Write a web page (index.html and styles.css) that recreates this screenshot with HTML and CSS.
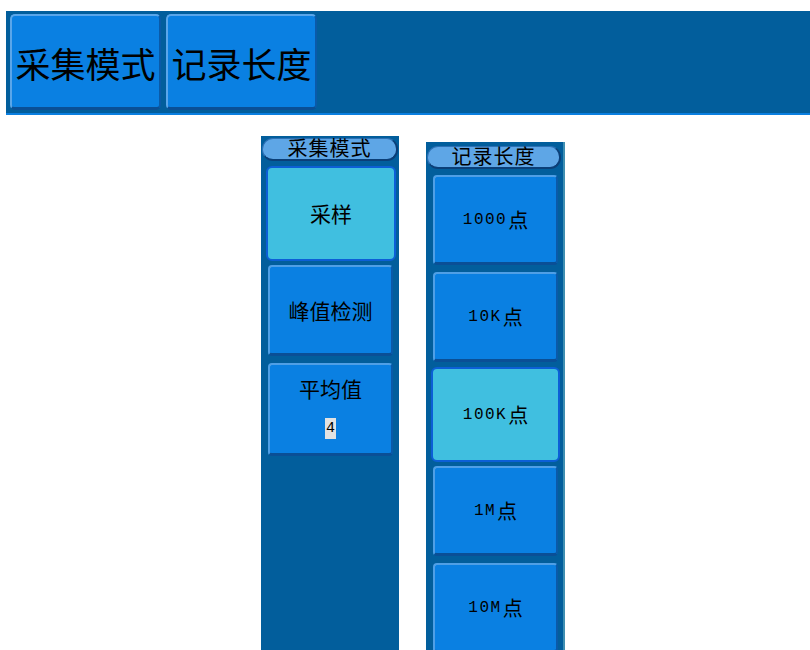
FILE: index.html
```html
<!DOCTYPE html>
<html lang="zh">
<head>
<meta charset="utf-8">
<title>采集模式 / 记录长度</title>
<link rel="stylesheet" href="styles.css">
</head>
<body>
<div class="topbar">
  <div class="top-btn">采集模式</div>
  <div class="top-btn">记录长度</div>
</div>
<div class="panels">
  <div class="panel panel-acq">
    <div class="pill">采集模式</div>
    <div class="btn sel"><span class="cn">采样</span></div>
    <div class="btn"><span class="cn">峰值检测</span></div>
    <div class="btn btn-avg">
      <span class="cn">平均值</span>
      <span class="num-box">4</span>
    </div>
  </div>
  <div class="panel panel-len">
    <div class="pill">记录长度</div>
    <div class="btn"><span class="val">1000<span class="pt">点</span></span></div>
    <div class="btn"><span class="val">10K<span class="pt">点</span></span></div>
    <div class="btn sel"><span class="val">100K<span class="pt">点</span></span></div>
    <div class="btn"><span class="val">1M<span class="pt">点</span></span></div>
    <div class="btn"><span class="val">10M<span class="pt">点</span></span></div>
  </div>
</div>
</body>
</html>
```
FILE: styles.css
```css
* { box-sizing: border-box; }
html, body { margin: 0; padding: 0; background: #ffffff; overflow: hidden; }
body {
  font-family: "Noto Sans CJK SC", "Liberation Sans", sans-serif;
  color: #000;
  width: 810px;
  height: 650px;
}
.topbar {
  margin: 11px 0 0 6px;
  height: 104px;
  background: #025e9c;
  border-bottom: 2px solid #0a7fe0;
  display: flex;
  gap: 5px;
  padding: 3px 0 0 4px;
}
.top-btn {
  width: 151px;
  height: 96px;
  background: #0a80e2;
  border-radius: 5px;
  border-top: 2px solid #5aa6ea;
  border-left: 2px solid #5aa6ea;
  border-right: 2px solid #0a5aa8;
  border-bottom: 3px solid #0a4f96;
  display: flex;
  align-items: center;
  justify-content: center;
  font-size: 35px;
  line-height: 1;
  padding-top: 2px;
}
.panels {
  display: flex;
  align-items: flex-start;
  padding-left: 261px;
  gap: 27px;
}
.panel {
  background: #025e9c;
  height: 560px;
  display: flex;
  flex-direction: column;
}
.panel-acq {
  width: 138px;
  margin-top: 21px;
  padding: 2px 1px 0 1px;
}
.panel-len {
  width: 139px;
  margin-top: 27px;
  padding: 4px 2px 0 1px;
  border-right: 2px solid #3f8fb2;
}
.pill {
  height: 23px;
  border-radius: 11px;
  background: #5ea6e6;
  border: 1px solid #2c6fb4;
  border-bottom: 2px solid #0b3f78;
  border-right: 2px solid #0b3f78;
  font-size: 20px;
  line-height: 18px;
  text-align: center;
  letter-spacing: 1px;
  white-space: nowrap;
}
.btn {
  width: 125px;
  height: 90px;
  margin: 7px 0 0 6px;
  background: #0a80e2;
  border-radius: 4px;
  border-top: 2px solid #4f9fe6;
  border-left: 2px solid #4f9fe6;
  border-right: 2px solid #0a5aa8;
  border-bottom: 3px solid #0a4f96;
  display: flex;
  flex-direction: column;
  align-items: center;
  justify-content: center;
}
.btn + .btn { margin-top: 7px; }
.panel-len .pill + .btn { margin-top: 6px; }
.btn.sel {
  background: #40bfe0;
  border: 2px solid #0c5fd6;
  border-radius: 6px;
  width: 130px;
  height: 95px;
  margin-left: 4px;
  margin-bottom: -3px;
}
.panel-len .btn.sel { margin-top: 5px; width: 129px; margin-left: 4px; }
.panel-acq .pill + .btn.sel { margin-top: 5px; }
.panel-acq .btn { height: 91px; }
.panel-acq .btn.sel { height: 95px; }
.btn-avg { justify-content: flex-start; padding-top: 13px; height: 93px !important; }
.cn { font-size: 21px; line-height: 1; }
.num-box {
  margin-top: 19px;
  background: #e2e2e2;
  font-family: "Liberation Mono", monospace;
  font-size: 15px;
  line-height: 21px;
  width: 11px;
  text-align: center;
}
.val {
  font-family: "Liberation Mono", "DejaVu Sans Mono", monospace;
  font-size: 16px;
  letter-spacing: 1.5px;
  display: flex;
  align-items: center;
}
.pt {
  font-family: "Noto Sans CJK SC", sans-serif;
  font-size: 20px;
  letter-spacing: 0;
  margin-left: 1px;
}
```
